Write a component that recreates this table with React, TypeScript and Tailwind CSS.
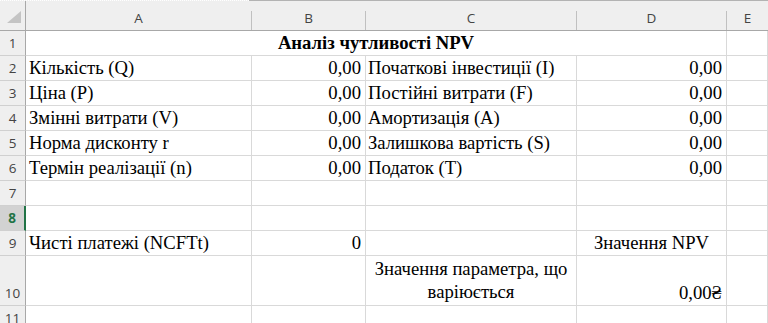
import React from 'react';

// column track widths include the 1px right gridline of each cell
const COLS = 'grid-cols-[26px_226px_114px_211px_150px_1fr]';
const LETTERS = ['A', 'B', 'C', 'D', 'E'];

type Row = { n: number; a?: string; b?: string; c?: string; d?: string };

const ROWS: Row[] = [
  { n: 2, a: 'Кількість (Q)', b: '0,00', c: 'Початкові інвестиції (I)', d: '0,00' },
  { n: 3, a: 'Ціна (P)', b: '0,00', c: 'Постійні витрати (F)', d: '0,00' },
  { n: 4, a: 'Змінні витрати (V)', b: '0,00', c: 'Амортизація (A)', d: '0,00' },
  { n: 5, a: 'Норма дисконту r', b: '0,00', c: 'Залишкова вартість (S)', d: '0,00' },
  { n: 6, a: 'Термін реалізації (n)', b: '0,00', c: 'Податок (T)', d: '0,00' },
  { n: 7 },
  { n: 8 },
];

const cell =
  'flex items-end border-r border-b border-[#d9d9d9] pb-[2px] leading-[20px] whitespace-nowrap overflow-visible';

function RowHead({ n, tall, selected }: { n: number; tall?: boolean; selected?: boolean }) {
  return (
    <div
      className={
        'flex items-end justify-center border-b border-[#d0d0d0] pb-[3px] font-["Open_Sans",sans-serif] text-[13.5px] leading-[18px] ' +
        (selected
          ? 'bg-[#d2d2d2] border-r-2 border-r-[#217346] font-bold text-[#217346]'
          : 'bg-[#efefef] border-r border-r-[#a8a8a8] text-[#444]') +
        (tall ? ' h-[50px]' : ' h-[25px]')
      }
    >
      {n}
    </div>
  );
}

export default function App() {
  return (
    <div className="h-[323px] w-[768px] overflow-hidden bg-white font-['Liberation_Serif',serif] text-[18.67px] text-black">
      {/* thin strip above the column headers */}
      <div className="flex h-px">
        <div className="w-[249px] border-t border-dotted border-white bg-[#efefef]" />
        <div className="flex-1 bg-[#b3b3b3]" />
      </div>

      <div className={`grid ${COLS}`}>
        {/* column header row */}
        <div className="flex h-[30px] items-center justify-center border-r border-b border-[#a8a8a8] bg-[#efefef]">
          <svg width="14" height="12" viewBox="0 0 14 12" className="mt-[3px] ml-[2px]">
            <polygon points="14,0 14,12 0,12" fill="#c4c4c4" />
          </svg>
        </div>
        {LETTERS.map((l, i) => (
          <div key={l} className="h-[30px] border-b border-[#a8a8a8] bg-[#efefef] pt-[10px]">
            <div
              className={
                'flex h-full items-end justify-center pb-[3px] font-["Open_Sans",sans-serif] text-[13.5px] leading-[18px] text-[#444] ' +
                (i < 4 ? 'border-r border-[#c0c0c0]' : '')
              }
            >
              {l}
            </div>
          </div>
        ))}

        {/* row 1: title merged across A:D */}
        <RowHead n={1} />
        <div className={`${cell} col-span-4 justify-center font-bold`}>Аналіз чутливості NPV</div>
        <div className={cell} />

        {ROWS.map((r) => (
          <React.Fragment key={r.n}>
            <RowHead n={r.n} selected={r.n === 8} />
            <div className={`${cell} pl-[3px]`}>{r.a}</div>
            <div className={`${cell} justify-end pr-[4px]`}>{r.b}</div>
            <div className={`${cell} pl-[2px]`}>{r.c}</div>
            <div className={`${cell} justify-end pr-[4px]`}>{r.d}</div>
            <div className={cell} />
          </React.Fragment>
        ))}

        {/* row 9 */}
        <RowHead n={9} />
        <div className={`${cell} pl-[3px]`}>Чисті платежі (NCFTt)</div>
        <div className={`${cell} justify-end pr-[4px]`}>0</div>
        <div className={cell} />
        <div className={`${cell} justify-center`}>Значення NPV</div>
        <div className={cell} />

        {/* row 10 */}
        <RowHead n={10} tall />
        <div className={cell} />
        <div className={cell} />
        <div className="flex h-[50px] items-end justify-center border-r border-b border-[#d9d9d9] pb-[2px] text-center leading-[23px]">
          Значення параметра, що
          <br />
          варіюється
        </div>
        <div className={`${cell} justify-end pr-[4px]`}>0,00₴</div>
        <div className={cell} />

        {/* row 11 */}
        <RowHead n={11} />
        <div className={cell} />
        <div className={cell} />
        <div className={cell} />
        <div className={cell} />
        <div className={cell} />
      </div>
    </div>
  );
}
